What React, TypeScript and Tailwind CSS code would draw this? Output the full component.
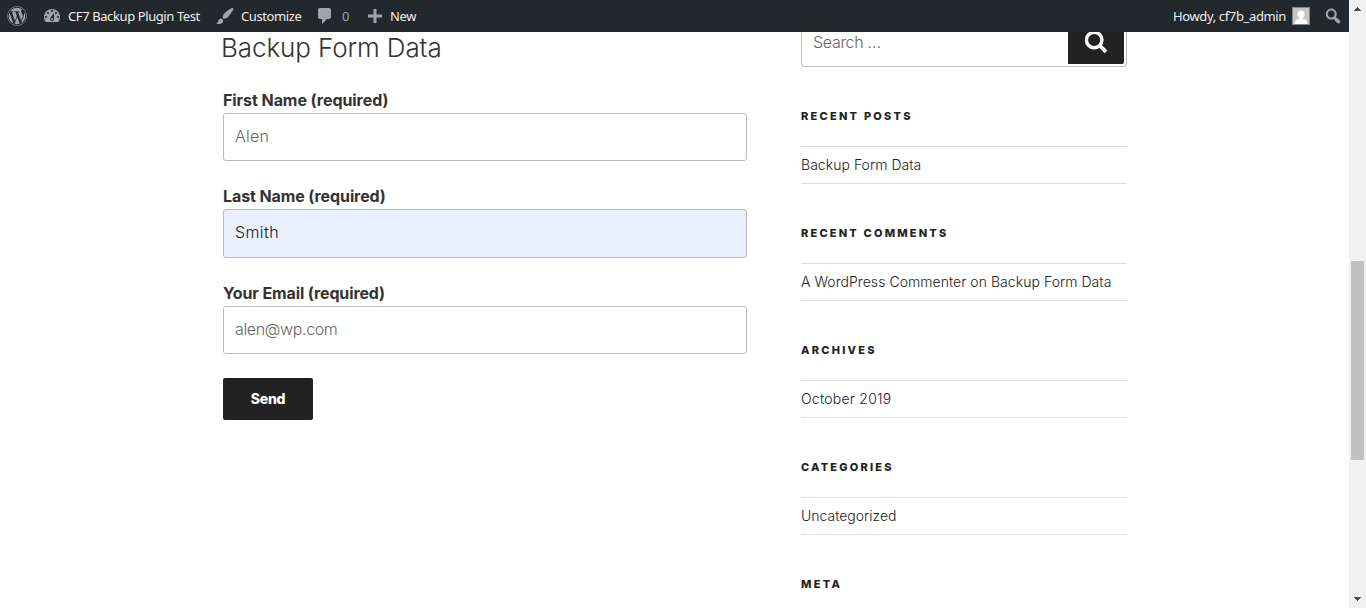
import { FaWordpress } from "react-icons/fa";

const dashicons = {
  dashboard:
    "M3.76 16h12.48c1.1-1.37 1.76-3.11 1.76-5 0-4.42-3.58-8-8-8s-8 3.58-8 8c0 1.89.66 3.63 1.76 5zM10 4c.55 0 1 .45 1 1s-.45 1-1 1-1-.45-1-1 .45-1 1-1zM6 6c.55 0 1 .45 1 1s-.45 1-1 1-1-.45-1-1 .45-1 1-1zm8 0c.55 0 1 .45 1 1s-.45 1-1 1-1-.45-1-1 .45-1 1-1zm-5.37 5.55L12 7v6c0 1.1-.9 2-2 2s-2-.9-2-2c0-.57.24-1.08.63-1.45zM4 10c.55 0 1 .45 1 1s-.45 1-1 1-1-.45-1-1 .45-1 1-1zm12 0c.55 0 1 .45 1 1s-.45 1-1 1-1-.45-1-1 .45-1 1-1zm-5 3c0-.55-.45-1-1-1s-1 .45-1 1 .45 1 1 1 1-.45 1-1z",
  brush:
    "M18.33 3.57s.27-.8-.31-1.36c-.53-.52-1.22-.24-1.22-.24-.61.3-5.76 3.47-7.67 5.57-.86.96-2.06 3.79-1.09 4.82.92.98 3.96-.17 4.79-1 2.06-2.06 5.21-7.17 5.5-7.79zM1.4 17.65c2.37-1.56 1.46-3.41 3.23-4.64.93-.65 2.22-.62 3.08.29.63.67.8 2.57-.16 3.46-1.57 1.45-4 1.55-6.15.89z",
  comment:
    "M5 2h9c1.1 0 2 .9 2 2v7c0 1.1-.9 2-2 2h-2l-5 5v-5H5c-1.1 0-2-.9-2-2V4c0-1.1.9-2 2-2z",
  plus: "M17 8.5v3h-5.5V17h-3v-5.5H3v-3h5.5V3h3v5.5H17z",
  search:
    "M12.14 4.18c1.87 1.87 2.11 4.75.72 6.89.12.1.22.21.36.31.2.16.47.36.81.59.34.24.56.39.66.47.42.31.73.57.94.78.32.32.6.65.84 1 .25.35.44.69.59 1.04.14.35.21.68.18 1-.02.32-.14.59-.36.81s-.49.34-.81.36c-.31.02-.65-.04-.99-.19-.35-.14-.7-.34-1.04-.59-.35-.24-.68-.52-1-.84-.21-.21-.47-.52-.77-.93-.1-.13-.25-.35-.47-.66-.22-.32-.4-.57-.56-.78-.16-.2-.29-.35-.44-.5-2.07 1.09-4.69.76-6.44-.98-2.14-2.15-2.14-5.64 0-7.78 2.15-2.15 5.63-2.15 7.78 0zm-1.41 6.36c1.36-1.37 1.36-3.58 0-4.95-1.37-1.37-3.59-1.37-4.95 0-1.37 1.37-1.37 3.58 0 4.95 1.36 1.37 3.58 1.37 4.95 0z",
};

function Dashicon({ name, className = "" }: { name: keyof typeof dashicons; className?: string }) {
  return (
    <svg viewBox="0 0 20 20" className={`size-5 shrink-0 fill-[#a0a5aa] ${className}`}>
      <path d={dashicons[name]} />
    </svg>
  );
}

function AdminBar() {
  return (
    <header className="relative z-10 flex h-8 shrink-0 items-center bg-[#23282d] pr-[6px] pl-[7px] font-['Noto_Sans',sans-serif] text-[13px] leading-8 whitespace-nowrap text-[#eee]">
      <FaWordpress className="size-5 shrink-0 text-[#a0a5aa]" />
      <div className="ml-[15px] flex w-[173px] items-center">
        <Dashicon name="dashboard" />
        <span className="ml-[6px] tracking-[-0.4px]">CF7 Backup Plugin Test</span>
      </div>
      <div className="flex w-[100px] items-center">
        <Dashicon name="brush" />
        <span className="ml-[6px] tracking-[-0.4px]">Customize</span>
      </div>
      <div className="flex w-[50px] items-center">
        <Dashicon name="comment" />
        <span className="ml-[7px] text-[#9ca2a7]">0</span>
      </div>
      <div className="flex items-center">
        <Dashicon name="plus" />
        <span className="ml-[5px] tracking-[-0.3px]">New</span>
      </div>
      <div className="ml-auto flex items-center">
        <span className="tracking-[-0.36px]">Howdy, cf7b_admin</span>
        <svg viewBox="0 0 18 18" className="ml-[6px] size-[18px]">
          <path fill="#82878c" d="M0 0h18v18H0z" />
          <path fill="#c5c5c5" d="M1 1h16v16H1z" />
          <path fill="#fff" d="M9 3.6c2.300 0 3.600 1.600 3.600 3.700 0 1.500-.7 2.800-1.600 3.500v1c2.200.6 3.900 1.500 4.100 3.200v2H2.900v-2c.2-1.700 1.900-2.600 4.100-3.200v-1c-.9-.7-1.600-2-1.600-3.500C5.400 5.200 6.700 3.600 9 3.600z" />
        </svg>
        <Dashicon name="search" className="ml-[13px]" />
      </div>
    </header>
  );
}

function Field({ label, labelClass, placeholder, value, className }: {
  label: string;
  labelClass: string;
  placeholder?: string;
  value?: string;
  className: string;
}) {
  return (
    <label className="block">
      <span className={`block h-[26px] text-base leading-[26px] font-bold whitespace-nowrap text-[#333] ${labelClass}`}>{label}</span>
      <input
        type="text"
        placeholder={placeholder}
        defaultValue={value}
        className={`block w-full rounded-[3px] border border-[#bbb] px-[11px] text-base font-light text-[#222] placeholder:text-[#666] ${className}`}
      />
    </label>
  );
}

function Widget({ title, titleClass, item, itemClass = "" }: {
  title: string;
  titleClass: string;
  item?: string;
  itemClass?: string;
}) {
  return (
    <section className="h-[117px]">
      <h2 className={`mb-[22px] h-4 text-[11px] leading-4 font-extrabold whitespace-nowrap text-[#222] ${titleClass}`}>{title}</h2>
      {item && (
        <div className="flex h-[38px] items-center border-y border-[#ddd]">
          <a href="#" className={`text-sm font-light whitespace-nowrap text-[#222] ${itemClass}`}>{item}</a>
        </div>
      )}
    </section>
  );
}

function Scrollbar() {
  return (
    <div className="flex w-[17px] shrink-0 flex-col items-center bg-[#f1f1f1]">
      <svg viewBox="0 0 17 17" className="size-[17px] fill-[#505050]" shapeRendering="crispEdges">
        <path d="M8 7h1v1h1v1h1v1h1v1H5v-1h1V9h1V8h1z" />
      </svg>
      <div className="mt-[244px] h-[199px] w-[13px] bg-[#c1c1c1]" />
      <svg viewBox="0 0 17 17" className="mt-auto size-[17px] fill-[#505050]" shapeRendering="crispEdges">
        <path d="M5 6h7v1h-1v1h-1v1H9v1H8V9H7V8H6V7H5z" />
      </svg>
    </div>
  );
}

export default function App() {
  return (
    <div className="flex h-[608px] w-[1366px] overflow-hidden bg-white font-['Inter',sans-serif]">
      <div className="flex min-w-0 flex-1 flex-col">
        <AdminBar />
        <div className="flex min-h-0 flex-1">
          <main className="ml-[223px] w-[524px]">
            <h1 className="-ml-[2px] h-[55px] text-[26px] leading-8 font-light tracking-[-0.1px] whitespace-nowrap text-[#333]">Backup Form Data</h1>
            <form className="flex flex-col">
              <Field label="First Name (required)" labelClass="tracking-[-0.06px]" placeholder="Alen" className="h-12 pb-[2px] tracking-[0.2px]" />
              <div className="mt-[22px]">
                <Field label="Last Name (required)" labelClass="tracking-[-0.1px]" value="Smith" className="h-[49px] bg-[#e8f0fe] pb-[3px] tracking-[0.4px]" />
              </div>
              <div className="mt-[22px]">
                <Field label="Your Email (required)" labelClass="tracking-[-0.12px]" placeholder="alen@wp.com" className="h-12 pb-[2px] tracking-[-0.35px]" />
              </div>
              <button type="button" className="mt-6 h-[42px] w-[90px] rounded-[2px] bg-[#222] text-sm font-extrabold tracking-[-0.2px] text-white">Send</button>
            </form>
          </main>
          <aside className="ml-[54px] w-[326px]">
            <div className="-mt-[14px] mb-[41px] flex h-[49px] items-center rounded-[3px] border border-[#bbb] p-[2px] pl-[11px]">
              <input type="search" placeholder="Search …" className="min-w-0 flex-1 pb-[2px] text-base font-light tracking-[-0.3px] placeholder:text-[#666]" />
              <button type="button" aria-label="Search" className="flex h-full w-14 items-center justify-center rounded-r-[2px] bg-[#222] pb-[2px]">
                <svg viewBox="0 0 24 24" className="size-6 fill-none stroke-white">
                  <circle cx="10.200" cy="10" r="7.800" strokeWidth="3.400" />
                  <path d="M15.700 15.500 22 21.800" strokeWidth="3.800" />
                </svg>
              </button>
            </div>
            <Widget title="RECENT POSTS" titleClass="tracking-[2.25px]" item="Backup Form Data" itemClass="tracking-[0.04px]" />
            <Widget title="RECENT COMMENTS" titleClass="tracking-[2.2px]" item="A WordPress Commenter on Backup Form Data" itemClass="tracking-[0.05px]" />
            <Widget title="ARCHIVES" titleClass="tracking-[2.25px]" item="October 2019" itemClass="tracking-[0.25px]" />
            <Widget title="CATEGORIES" titleClass="tracking-[2.2px]" item="Uncategorized" />
            <Widget title="META" titleClass="tracking-[2.3px]" />
          </aside>
        </div>
      </div>
      <Scrollbar />
    </div>
  );
}
